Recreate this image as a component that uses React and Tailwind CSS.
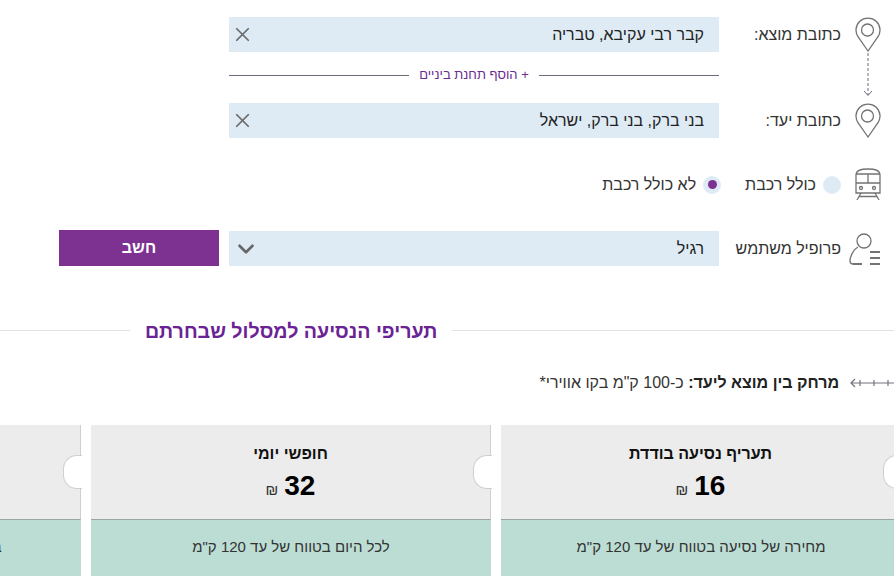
import React from "react";
import { ChevronDown, X } from "lucide-react";

const PinIcon = () => (
  <svg width="26" height="35" viewBox="0 0 26 35" fill="none" stroke="#737373" strokeWidth="1.3" className="shrink-0">
    <path d="M13 34 L3.5 20.5 A12 12 0 1 1 22.5 20.5 Z" />
    <circle cx="12.5" cy="13" r="6" />
  </svg>
);

const TrainIcon = () => (
  <svg width="26" height="33" viewBox="0 0 26 33" fill="none" stroke="#737373" strokeWidth="1.3" className="shrink-0">
    <path d="M1 7 C1 2 6 1 13 1 C20 1 25 2 25 7 V25 H1 Z" />
    <path d="M1 6 H25 M1 15 H25 M13 6 V15" />
    <circle cx="6" cy="20" r="1.5" />
    <circle cx="19" cy="20" r="1.5" />
    <path d="M6 25 L2 32 M20 25 L24 32 M4 28.5 H22" />
  </svg>
);

const UserIcon = () => (
  <svg width="32" height="34" viewBox="0 0 32 34" fill="none" stroke="#737373" strokeWidth="1.3" className="shrink-0">
    <circle cx="15" cy="9" r="7" />
    <path d="M9 15 C5 17 1 24 1 29 C1 31 2 32 4 32" />
    <path d="M4 32 H13 M21 20 H31 M21 26 H31 M21 32 H31" strokeWidth="2" />
  </svg>
);

const Field = ({ value, children }) => (
  <div className="w-[490px] h-[35px] shrink-0 bg-[#deebf5] flex items-center pr-[15px] pl-[2px] text-[16px] text-[#222]">
    <span className="flex-1">{value}</span>
    {children}
  </div>
);

const Radio = ({ label, checked }) => (
  <div className="flex items-center gap-[7px] text-[16px] text-[#333]">
    <span className="w-[18px] h-[18px] rounded-full bg-[#deebf5] flex items-center justify-center">
      {checked && <span className="w-[9px] h-[9px] rounded-full bg-[#7d3191]" />}
    </span>
    {label}
  </div>
);

const Card = ({ title, price, note }) => (
  <div className="relative w-[400px] shrink-0">
    <div className="h-[95px] bg-[#ececec] border-r border-[#cfcfcf] border-b border-b-[#98a5a0] flex flex-col items-center pt-[19px]">
      <div className="h-[20px] text-[16px] font-bold text-[#111] leading-[20px]">{title}</div>
      <div className="h-[32px] flex items-center gap-[6px] mt-[6px]">
        <span className="text-[28px] font-bold text-black leading-[32px]">{price}</span>
        {price && <span className="text-[15px] text-[#333] mt-[8px]">₪</span>}
      </div>
    </div>
    <div className="h-[60px] bg-[#bcddd4] flex justify-center pt-[16px] text-[15px] text-[#333]">
      {note}
    </div>
    <span className="absolute right-[-1px] top-[30px] w-[19px] h-[34px] bg-white border border-r-0 border-[#cfcfcf] rounded-l-[14px]" />
  </div>
);

export default function App() {
  return (
    <div dir="rtl" className="w-[894px] h-[576px] overflow-hidden bg-white font-['Liberation_Sans',sans-serif]">
      <div className="pt-[17px] pr-[13px]">
        <div className="flex items-center h-[35px]">
          <div className="w-[26px] flex justify-start"><PinIcon /></div>
          <div className="w-[136px] pr-[14px] text-[16px] text-[#333]">כתובת מוצא:</div>
          <Field value="קבר רבי עקיבא, טבריה">
            <X size={23} color="#6b6b6b" strokeWidth={1.8} />
          </Field>
        </div>
        <div className="flex h-[51px]">
          <div className="w-[26px] flex justify-center">
            <svg width="10" height="45" viewBox="0 0 10 45" fill="none" stroke="#6b6b80">
              <path d="M5 1 V43" strokeDasharray="3 2" />
              <path d="M1 39 L5 43.5 L9 39" />
            </svg>
          </div>
          <div className="w-[136px]" />
          <div className="w-[490px] flex items-center gap-[10px] pb-[5px]">
            <div className="flex-1 h-px bg-[#6f6a7a]" />
            <span className="text-[13px] text-[#6a2c91]">+ הוסף תחנת ביניים</span>
            <div className="flex-1 h-px bg-[#6f6a7a]" />
          </div>
        </div>
        <div className="flex items-center h-[35px]">
          <div className="w-[26px] flex justify-start"><PinIcon /></div>
          <div className="w-[136px] pr-[14px] text-[16px] text-[#333]">כתובת יעד:</div>
          <Field value="בני ברק, בני ברק, ישראל">
            <X size={23} color="#6b6b6b" strokeWidth={1.8} />
          </Field>
        </div>
        <div className="flex items-center h-[33px] mt-[30px]">
          <div className="w-[26px] flex justify-start"><TrainIcon /></div>
          <div className="flex gap-[24px] mr-[14px]">
            <Radio label="כולל רכבת" />
            <Radio label="לא כולל רכבת" checked />
          </div>
        </div>
        <div className="flex items-end h-[36px] mt-[29px]">
          <div className="w-[26px] h-[35px] flex justify-start items-center"><UserIcon /></div>
          <div className="w-[136px] h-[35px] flex items-center pr-[14px] text-[16px] text-[#333]">פרופיל משתמש</div>
          <Field value="רגיל">
            <ChevronDown size={26} color="#666" strokeWidth={2.4} className="ml-[2px]" />
          </Field>
          <button className="w-[160px] h-[36px] mr-[10px] bg-[#7d3191] text-white text-[16px] font-bold">חשב</button>
        </div>
      </div>

      <div className="flex items-center mt-[52px] h-[24px]">
        <div className="flex-1 h-px bg-[#e3e3e3]" />
        <h2 className="px-[15px] mt-[4px] text-[19.6px] font-bold text-[#6a2294]">תעריפי הנסיעה למסלול שבחרתם</h2>
        <div className="w-[130px] h-px bg-[#e3e3e3]" />
      </div>

      <div className="flex items-center mt-[29px] text-[16px] text-[#333]">
        <svg width="44" height="10" viewBox="0 0 44 10" fill="none" stroke="#737380" strokeWidth="1.2" className="shrink-0">
          <path d="M44 5 H1 M5 1 L1 5 L5 9 M10 2 V8 M24 2 V8 M38 2 V8" />
        </svg>
        <span className="mr-[11px]"><b className="text-[#222]">מרחק בין מוצא ליעד:</b> כ-100 ק"מ בקו אווירי*</span>
      </div>

      <div className="flex gap-[10px] mt-[30px] mr-[-7px]">
        <Card title="תעריף נסיעה בודדת" price="16" note={'מחירה של נסיעה בטווח של עד 120 ק"מ'} />
        <Card title="חופשי יומי" price="32" note={'לכל היום בטווח של עד 120 ק"מ'} />
        <Card note={'בחודש הקלנדרי בטווח של עד 120 ק"מ'} />
      </div>
    </div>
  );
}
